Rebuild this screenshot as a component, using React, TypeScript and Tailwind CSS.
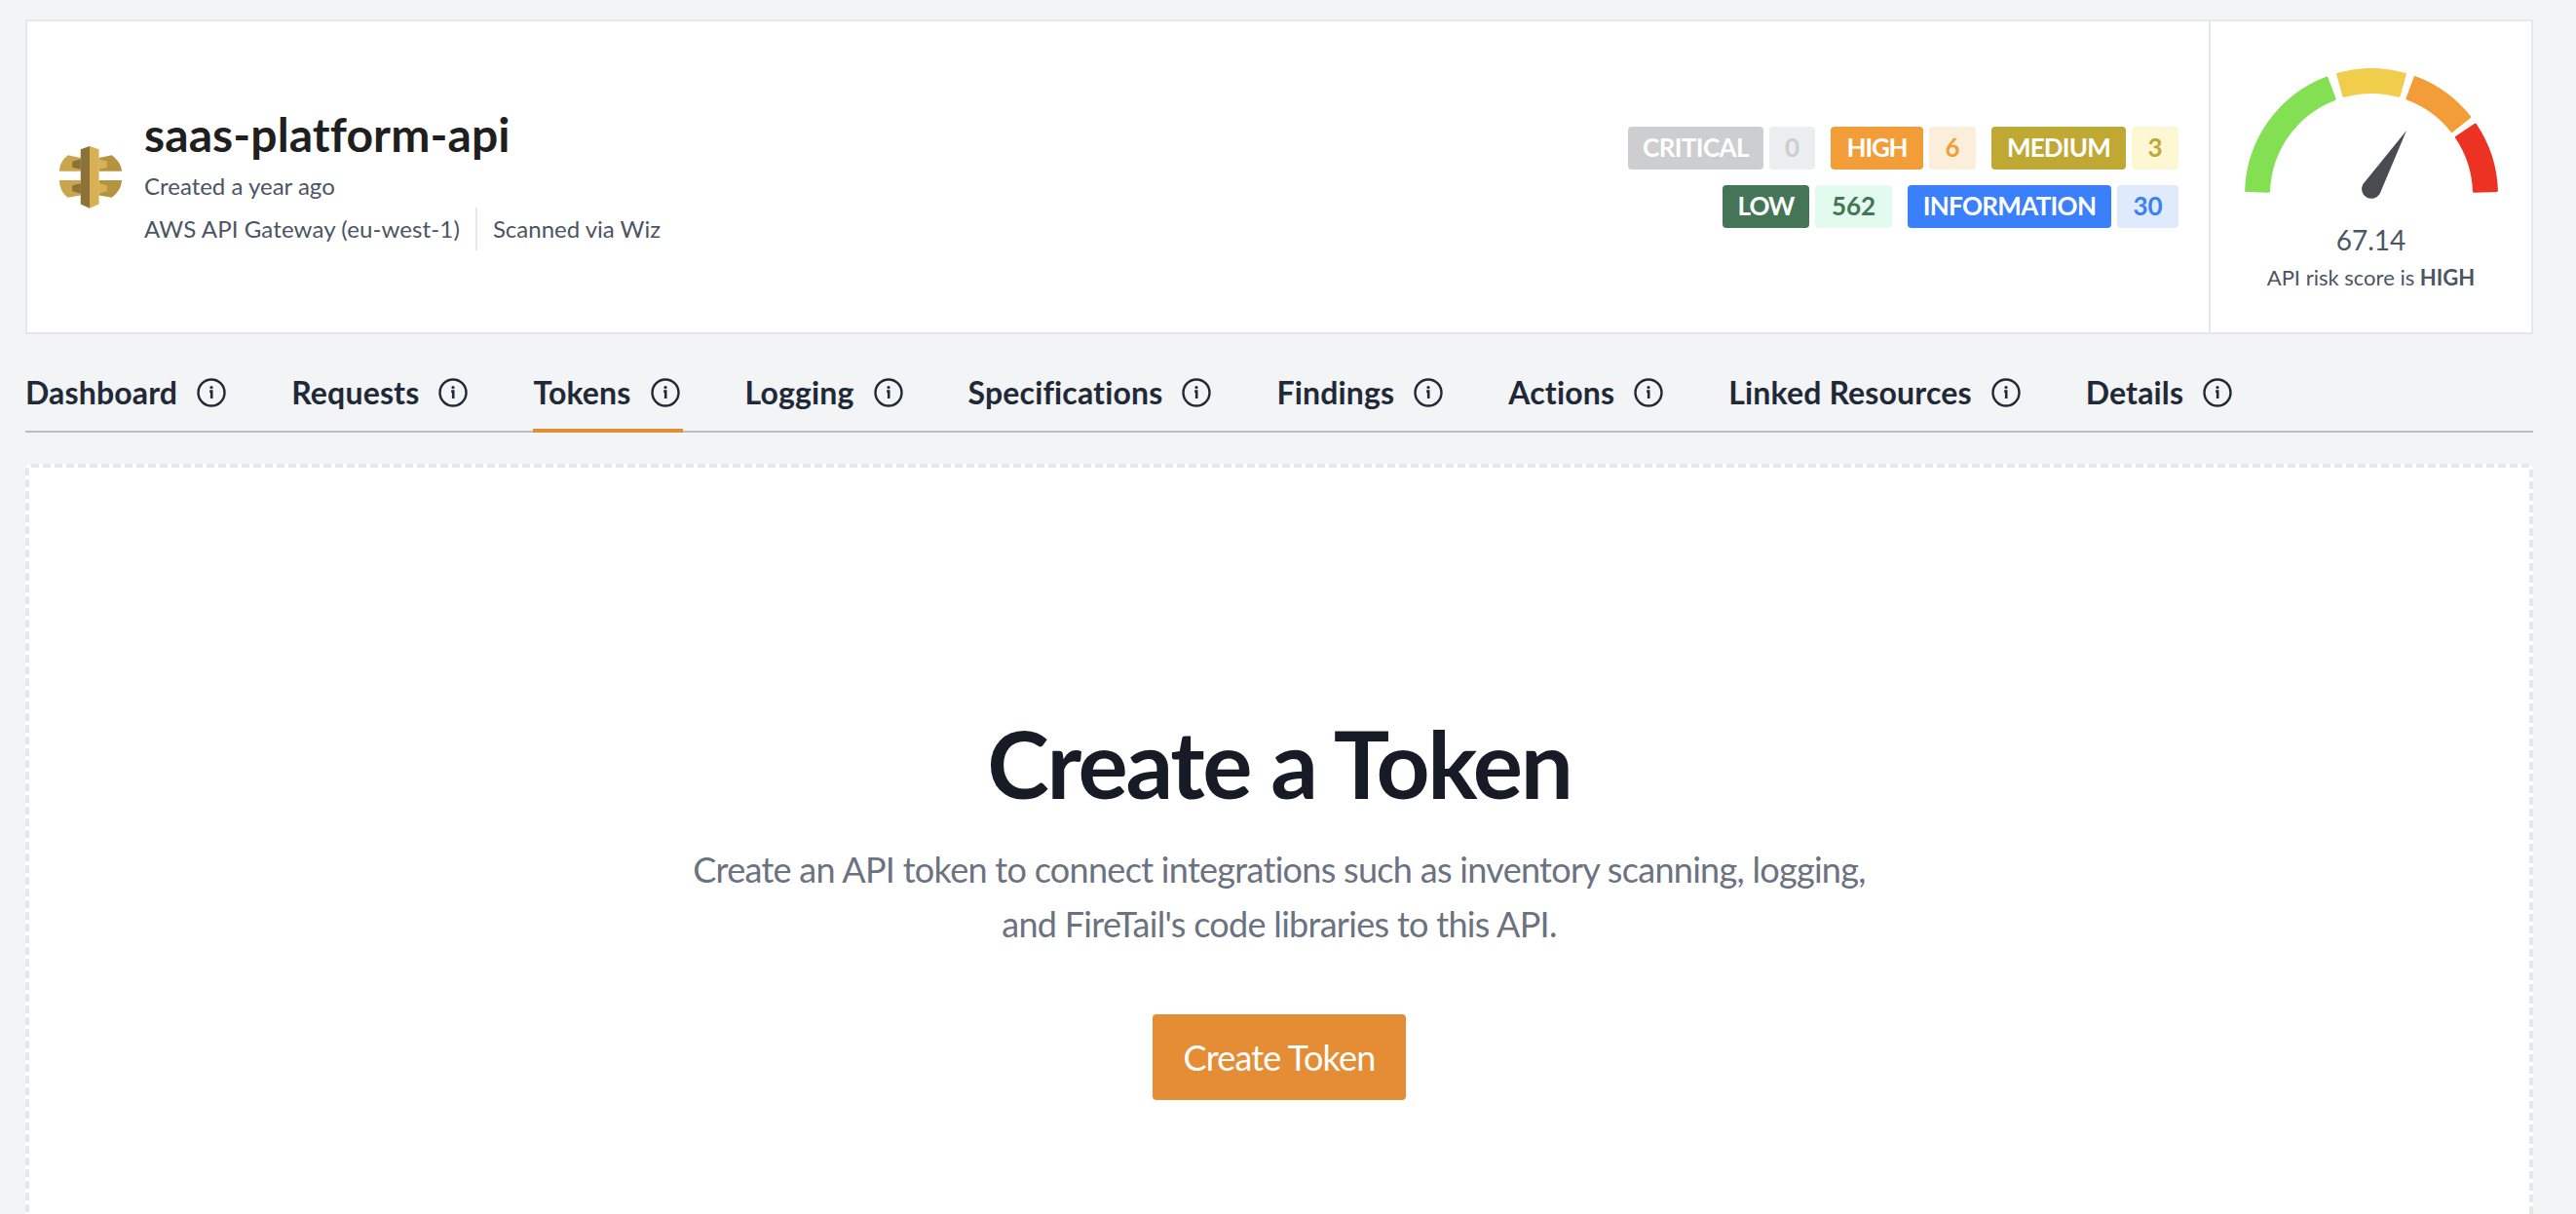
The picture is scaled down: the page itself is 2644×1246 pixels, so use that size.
import React from "react";

const font = { fontFamily: '"Lato", "Noto Sans", sans-serif' };

function arc(a0: number, a1: number, ro = 128.5, ri = 105.5, cx = 130, cy = 130) {
  const p = (r: number, a: number) => {
    const t = (a * Math.PI) / 180;
    return `${(cx + r * Math.cos(t)).toFixed(2)} ${(cy - r * Math.sin(t)).toFixed(2)}`;
  };
  return `M${p(ro, a0)} A${ro} ${ro} 0 0 1 ${p(ro, a1)} L${p(ri, a1)} A${ri} ${ri} 0 0 0 ${p(ri, a0)} Z`;
}

function Gauge() {
  const segs: [number, number, string][] = [
    [178, 111, "#84E053"],
    [105.5, 74.5, "#F0CE4B"],
    [69.5, 38.5, "#F29D38"],
    [34, 2, "#EC3323"],
  ];
  return (
    <svg width="260" height="145" viewBox="0 0 260 145" className="block">
      {segs.map(([a, b, c]) => (
        <path key={c} d={arc(a, b)} fill={c} stroke={c} strokeWidth="3" strokeLinejoin="round" />
      ))}
      <path d="M166 64 L138.6 129.1 A10 10 0 0 1 121.4 118.9 Z" fill="#484B50" />
    </svg>
  );
}

function Logo() {
  return (
    <svg width="64" height="64" viewBox="12 12 194 194" className="shrink-0">
      <path d="M78 48 L38 40 C20 55 12 72 12 90 H78 Z" fill="#CBA54C" />
      <path d="M135 48 L175 40 C195 56 205 72 206 90 H135 Z" fill="#B4943F" />
      <path d="M78 165 L38 172 C20 158 12 138 12 118 H78 Z" fill="#CBA54C" />
      <path d="M135 165 L175 172 C195 156 205 138 206 118 H135 Z" fill="#B4943F" />
      <path d="M78 52 L52 60 V78 L78 84 Z" fill="#8C7238" />
      <path d="M135 52 L160 60 V78 L135 84 Z" fill="#D8B155" />
      <path d="M78 128 L52 134 V152 L78 160 Z" fill="#8C7238" />
      <path d="M135 128 L160 134 V152 L135 160 Z" fill="#D8B155" />
      <path d="M78 22 L106 12 V205 L78 192 Z" fill="#8C7238" />
      <path d="M106 12 L135 22 V192 L106 205 Z" fill="#D8B155" />
    </svg>
  );
}

function InfoIcon() {
  return (
    <svg width="30" height="30" viewBox="0 0 30 30" fill="none" className="shrink-0">
      <circle cx="15" cy="15" r="13.5" stroke="#1F2937" strokeWidth="2.4" />
      <circle cx="15" cy="9.6" r="1.6" fill="#1F2937" />
      <path d="M13.2 13.6 H15.2 V21" stroke="#1F2937" strokeWidth="2.6" />
    </svg>
  );
}

const tabs = ["Dashboard", "Requests", "Tokens", "Logging", "Specifications", "Findings", "Actions", "Linked Resources", "Details"];

function Badge({ label, count, a, b, c, w1, w2, t }: { label: string; count: string; a: string; b: string; c: string; w1: string; w2: string; t: string }) {
  return (
    <div className="flex gap-[6px]">
      <span className={`flex h-[44px] items-center justify-center rounded-[4px] text-[26px] font-bold text-white ${t} ${a} ${w1}`}>{label}</span>
      <span className={`flex h-[44px] items-center justify-center rounded-[4px] text-[26px] font-bold ${b} ${c} ${w2}`}>{count}</span>
    </div>
  );
}

export default function App() {
  return (
    <div style={font} className="h-[1246px] overflow-hidden bg-[#F3F4F6] pl-[26px] pr-[44px] pt-[20px]">
      <div className="flex h-[323px] border-2 border-[#E5E7EB] bg-white">
        <div className="flex flex-1 items-center justify-between pl-[33px] pr-[31px]">
          <div className="flex items-center gap-[23px]">
            <Logo />
            <div className="flex flex-col pt-[4px]">
              <div className="text-[48px] font-bold leading-[56px] tracking-[0.1px] text-[#1F1F1F]">saas-platform-api</div>
              <div className="mt-[7px] text-[24px] leading-[36px] text-[#4B5563]">Created a year ago</div>
              <div className="mt-[4px] flex items-center text-[24px] leading-[36px] text-[#4B5563]">
                <span className="tracking-[0.12px]">AWS API Gateway (eu-west-1)</span>
                <span className="mx-[16px] h-[44px] w-[2px] bg-[#E5E7EB]" />
                <span>Scanned via Wiz</span>
              </div>
            </div>
          </div>
          <div className="flex flex-col items-end gap-[16px]">
            <div className="flex gap-[16px]">
              <Badge label="CRITICAL" count="0" t="tracking-[-0.6px]" a="bg-[#CDCED0]" b="bg-[#ECEDEF]" c="text-[#CDCED0]" w1="w-[139px]" w2="w-[47px]" />
              <Badge label="HIGH" count="6" t="tracking-[-1.2px]" a="bg-[#F29D38]" b="bg-[#FBEFDC]" c="text-[#F29D38]" w1="w-[95px]" w2="w-[48px]" />
              <Badge label="MEDIUM" count="3" t="tracking-[-0.8px]" a="bg-[#BFA934]" b="bg-[#FDF7D3]" c="text-[#BFA934]" w1="w-[138px]" w2="w-[48px]" />
            </div>
            <div className="flex gap-[16px]">
              <Badge label="LOW" count="562" t="tracking-[-1px]" a="bg-[#447556]" b="bg-[#E2FBEE]" c="text-[#447556]" w1="w-[89px]" w2="w-[79px]" />
              <Badge label="INFORMATION" count="30" t="tracking-[-0.7px]" a="bg-[#3A7FFB]" b="bg-[#DFEBFD]" c="text-[#3A7FFB]" w1="w-[209px]" w2="w-[63px]" />
            </div>
          </div>
        </div>
        <div className="flex w-[331px] flex-col items-center border-l-2 border-[#E5E7EB] pt-[48px]">
          <Gauge />
          <div className="mt-[13px] text-[28px] leading-[36px] text-[#4B5563]">67.14</div>
          <div className="mt-[3px] text-[22px] leading-[36px] text-[#4B5563]">
            API risk score is <b>HIGH</b>
          </div>
        </div>
      </div>

      <div className="mt-[17px] flex h-[84px] gap-[64px] border-b-2 border-[#BDBDBD]">
        {tabs.map((t) => (
          <div key={t} className={`flex h-[84px] items-start pr-[3px] pt-[23px] ${t === "Tokens" ? "border-b-4 border-[#E58D35]" : ""}`}>
            <div className="flex h-[40px] items-center gap-[20px]">
              <span className="text-[32px] font-bold leading-[40px] tracking-[0.16px] text-[#1F2937]">{t}</span>
              <InfoIcon />
            </div>
          </div>
        ))}
      </div>

      <div className="mt-[32px] flex h-[900px] flex-col items-center rounded-[6px] border-4 border-dashed border-[#E5E7EB] bg-white pt-[243px]">
        <h1 className="text-[96px] font-bold leading-[120px] tracking-[-2.3px] text-[#161B25]">Create a Token</h1>
        <p className="mt-[21px] w-[1300px] text-center text-[36px] leading-[56px] tracking-[-0.7px] text-[#6B7280]">
          Create an API token to connect integrations such as inventory scanning, logging,
          <br />
          and FireTail's code libraries to this API.
        </p>
        <button className="mt-[65px] flex h-[88px] w-[260px] items-center justify-center rounded-[4px] bg-[#E58D35] text-[36px] tracking-[-0.8px] text-white">
          Create Token
        </button>
      </div>
    </div>
  );
}
